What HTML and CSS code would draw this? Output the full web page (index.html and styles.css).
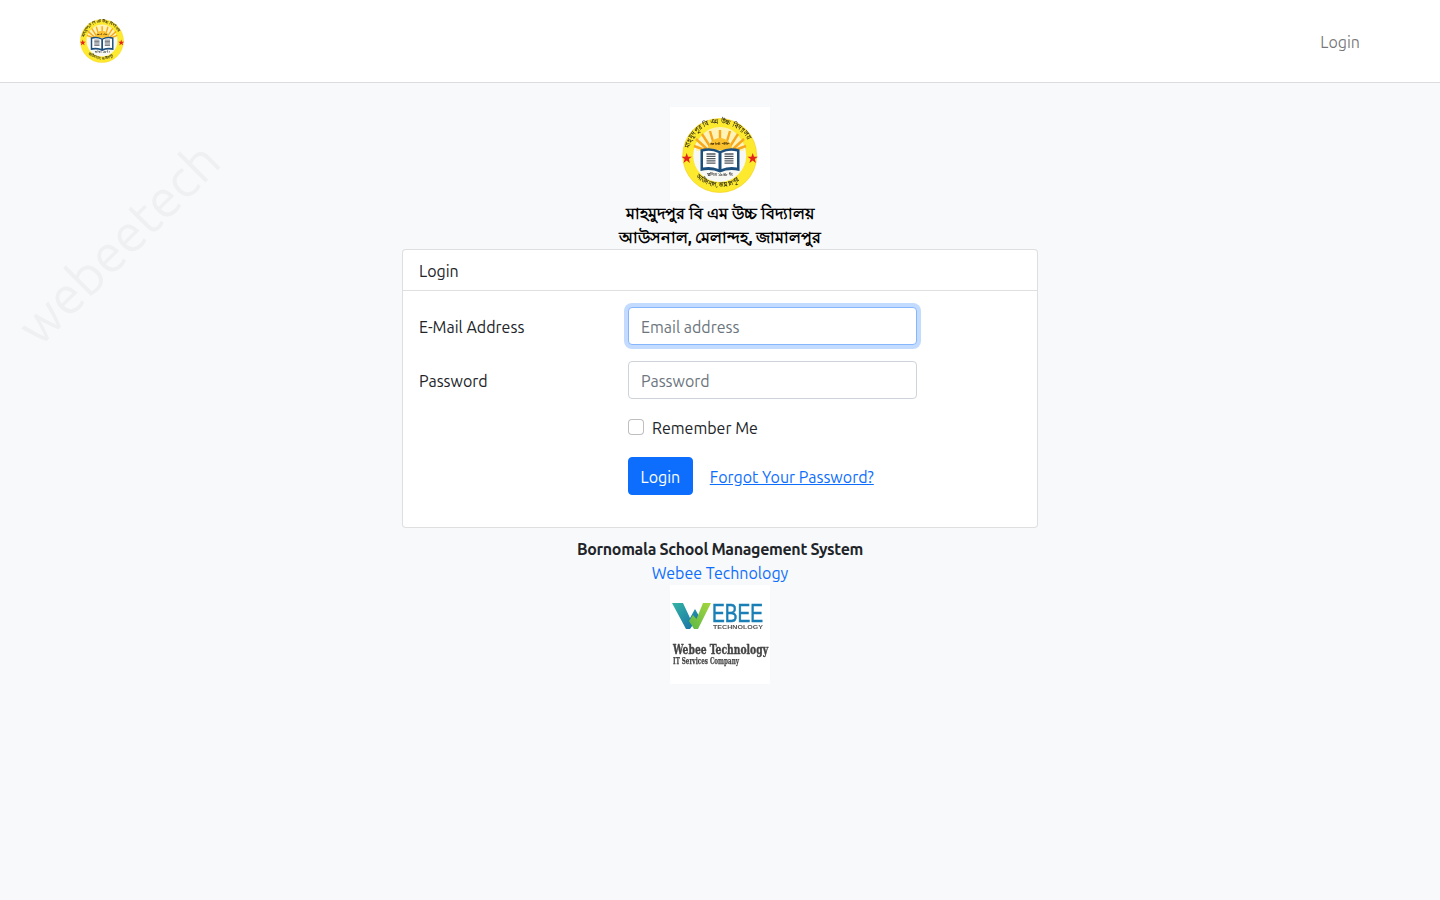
FILE: index.html
```html
<!DOCTYPE html>
<html lang="en">
<head>
<meta charset="utf-8">
<title>Login</title>
<link rel="stylesheet" href="styles.css">
</head>
<body>
<div class="watermark" aria-hidden="true">webeetech</div>

<nav class="navbar">
  <a class="brand" href="#"><svg class="brand-logo" viewBox="12 11 75.500 75"><use href="#school"/></svg></a>
  <a class="nav-link" href="#">Login</a>
</nav>

<main class="page">
  <header class="school">
    <div class="logo-box">
      <svg class="school-logo" viewBox="0 0 100 94">
        <g id="school">
          <circle cx="49.700" cy="48.500" r="37" fill="#fde92e" stroke="#f4cf12" stroke-width=".6"/>
          <circle cx="49.700" cy="48.500" r="26.500" fill="#f7f7f4"/>
          <path d="M26 44A24 24 0 0 1 74 44Z" fill="#fff3b8"/>
          <path d="M50 41V23M45 41 40 24M55 41 60 24M41 41 32 27M59 41 68 27M37 42 26 32M63 42 74 32M35 43 24 39M65 43 76 39" stroke="#f8a81c" stroke-width="2.400"/>
          <path d="M38 43A12 12 0 0 1 62 43Z" fill="#fac02e"/>
          <path d="M30.500 42.500Q41 39.500 50 44Q59 39.500 69.500 42.500V64Q59 61.500 50 65.500Q41 61.500 30.500 64Z" fill="#1d4f7c"/>
          <path d="M33 44.500Q41 42.500 48.500 46V62Q41 59 33 60.500ZM51.500 46Q59 42.500 67 44.500V60.500Q59 59 51.500 62Z" fill="#fff"/>
          <path d="M36.500 47H45.500M36.500 49.300H45.500M36.500 51.600H45.500M36.500 53.900H45.500M36.500 56.200H45.500M54.500 47H63.500M54.500 49.300H63.500M54.500 51.600H63.500M54.500 53.900H63.500M54.500 56.200H63.500" stroke="#50585f" stroke-width="1.300"/>
          <path d="M16.700 46l1.300 3.700h3.900l-3.100 2.400 1.100 3.800-3.200-2.300-3.200 2.300 1.100-3.800-3.100-2.400h3.900z" fill="#e2231a"/>
          <path d="M82.700 46l1.300 3.700h3.900l-3.100 2.400 1.100 3.800-3.200-2.300-3.200 2.300 1.100-3.800-3.100-2.400h3.900z" fill="#e2231a"/>
          <path id="ringTop" d="M19 41A31.500 31.500 0 0 1 80.500 41" fill="none"/>
          <path id="ringBottom" d="M26 70A33.500 33.500 0 0 0 74 70" fill="none"/>
          <text class="s-ring"><textPath href="#ringTop" textLength="76" lengthAdjust="spacingAndGlyphs">মাহমুদপুর বি এম উচ্চ বিদ্যালয়</textPath></text>
          <text class="s-ring"><textPath href="#ringBottom" textLength="48" lengthAdjust="spacingAndGlyphs">আউসনাল, জামালপুর</textPath></text>
          <text class="s-motto" x="50" y="38" text-anchor="middle" textLength="19" lengthAdjust="spacingAndGlyphs">জ্ঞানই শক্তি</text>
          <text class="s-est" x="50" y="69" text-anchor="middle" textLength="26" lengthAdjust="spacingAndGlyphs">স্থাপিত ১৯৪৮ ইং</text>
        </g>
      </svg>
    </div>
    <strong class="school-name">মাহমুদপুর বি এম উচ্চ বিদ্যালয়</strong>
    <strong class="school-name">আউসনাল, মেলান্দহ, জামালপুর</strong>
  </header>

  <section class="card">
    <div class="card-header">Login</div>
    <form class="card-body">
      <div class="row">
        <label class="row-label" for="email">E-Mail Address</label>
        <input class="field is-focus" id="email" type="email" placeholder="Email address">
      </div>
      <div class="row">
        <label class="row-label" for="password">Password</label>
        <input class="field" id="password" type="password" placeholder="Password">
      </div>
      <div class="row row-check">
        <span class="row-spacer"></span>
        <label class="check"><input class="check-box" type="checkbox"><span class="check-text">Remember Me</span></label>
      </div>
      <div class="row">
        <span class="row-spacer"></span>
        <div class="actions">
          <button class="btn" type="button">Login</button>
          <a class="forgot" href="#">Forgot Your Password?</a>
        </div>
      </div>
    </form>
  </section>

  <footer class="foot">
    <strong class="foot-title">Bornomala School Management System</strong>
    <a class="foot-link" href="#">Webee Technology</a>
    <div class="logo-box foot-logo">
      <svg class="webee" viewBox="0 0 100 99">
        <defs>
          <linearGradient id="wTeal" x1="0" y1="0" x2="1" y2="1">
            <stop offset="0" stop-color="#35b5a4"/>
            <stop offset="1" stop-color="#176ba8"/>
          </linearGradient>
          <linearGradient id="wGreen" x1="1" y1="0" x2="0" y2="1">
            <stop offset="0" stop-color="#a6d63c"/>
            <stop offset="1" stop-color="#5cb748"/>
          </linearGradient>
        </defs>
        <path d="M2 18H13L20 33 25 24 29 31 20 44H16Z" fill="url(#wTeal)"/>
        <path d="M19 36 23 30 26.500 34 33 18H41L28 44H24Z" fill="url(#wGreen)"/>
        <text class="w-ebee" x="42" y="37" textLength="51" lengthAdjust="spacingAndGlyphs">EBEE</text>
        <text class="w-tech" x="43" y="44" textLength="50" lengthAdjust="spacingAndGlyphs">TECHNOLOGY</text>
        <text class="w-name" x="3" y="69" textLength="95" lengthAdjust="spacingAndGlyphs">Webee Technology</text>
        <text class="w-sub" x="3" y="79" textLength="66" lengthAdjust="spacingAndGlyphs">IT Services Company</text>
      </svg>
    </div>
  </footer>
</main>
</body>
</html>
```
FILE: styles.css
```css
* { box-sizing: border-box; }
html, body { margin: 0; }
body {
  min-height: 900px;
  background: #f8f9fa;
  color: #212529;
  font-family: Ubuntu, "Noto Sans", "Liberation Sans", sans-serif;
  font-size: 16px;
  line-height: 24px;
  overflow: hidden;
  position: relative;
}
.watermark {
  position: absolute;
  left: -12px;
  top: 213px;
  font-size: 52px;
  line-height: 60px;
  font-weight: 400;
  color: #eff0f1;
  transform: rotate(-45deg);
  white-space: nowrap;
}
.navbar {
  position: relative;
  height: 83px;
  background: #fff;
  border-bottom: 1px solid #dcdcdc;
  padding: 0 80px;
  display: flex;
  align-items: center;
  justify-content: space-between;
}
.brand { display: flex; }
.brand-logo { width: 44px; height: 44px; filter: blur(.5px); }
.nav-link { color: rgba(0, 0, 0, .55); text-decoration: none; padding-top: 2px; }
.page {
  position: relative;
  display: flex;
  flex-direction: column;
  align-items: center;
  padding-top: 24px;
}
.school, .foot {
  display: flex;
  flex-direction: column;
  align-items: center;
  text-align: center;
}
.logo-box { width: 100px; height: 94px; background: #fff; }
.school-logo { display: block; width: 100px; height: 94px; filter: blur(.4px); }
.school-name { display: block; font-weight: 700; color: #000; height: 24px; }
.s-ring { font: 700 6.500px "Noto Sans", sans-serif; fill: #2f2a18; }
.s-motto { font: 700 4px "Noto Sans", sans-serif; fill: #4a3208; }
.s-est { font: 700 4.500px "Noto Sans", sans-serif; fill: #333; }
.card {
  width: 636px;
  background: #fff;
  border: 1px solid rgba(0, 0, 0, .125);
  border-radius: 4px;
}
.card-header {
  height: 41px;
  padding: 9px 16px 7px;
  border-bottom: 1px solid rgba(0, 0, 0, .125);
}
.card-body { padding: 16px 16px 32px; display: flex; flex-direction: column; gap: 16px; }
.row { display: grid; grid-template-columns: 209px 289px; align-items: center; min-height: 38px; }
.row-label { padding-top: 2px; }
.row-check { min-height: 24px; margin-bottom: 2px; }
.field {
  height: 38px;
  width: 289px;
  border: 1px solid #ced4da;
  border-radius: 4px;
  padding: 7px 12px 5px;
  font: inherit;
  color: #212529;
  background: #fff;
  outline: none;
}
.field::placeholder { color: #6c757d; opacity: 1; }
.is-focus { border-color: #86b7fe; box-shadow: 0 0 0 4px rgba(13, 110, 253, .25); }
.check { display: flex; align-items: center; gap: 8px; height: 24px; }
.check-text { padding-top: 2px; line-height: 22px; }
.check-box {
  appearance: none;
  width: 16px;
  height: 16px;
  margin: 0;
  background: #fff;
  border: 1px solid rgba(0, 0, 0, .25);
  border-radius: 4px;
}
.actions { display: flex; align-items: center; gap: 17px; white-space: nowrap; }
.btn {
  height: 38px;
  padding: 7px 11.500px 5px;
  border: 1px solid #0d6efd;
  border-radius: 4px;
  background: #0d6efd;
  color: #fff;
  font: inherit;
}
.forgot { color: #0d6efd; padding-top: 2px; line-height: 22px; }
.foot-link { color: #0d6efd; text-decoration: none; display: block; }
.foot-title { display: block; margin-top: 9px; font-weight: 600; letter-spacing: -.33px; }
.foot-logo { height: 99px; }
.webee { display: block; width: 100px; height: 99px; filter: blur(.4px); }
.w-ebee { font: 400 26px "Liberation Sans", sans-serif; fill: #1a7fb5; stroke: #1a7fb5; stroke-width: .6px; }
.w-tech { font: 700 5px "Liberation Sans", sans-serif; fill: #555; }
.w-name { font: 700 13px "DejaVu Serif", serif; fill: #454545; stroke: #454545; stroke-width: .4px; }
.w-sub { font: 700 9px "DejaVu Serif", serif; fill: #454545; stroke: #454545; stroke-width: .25px; }
```
